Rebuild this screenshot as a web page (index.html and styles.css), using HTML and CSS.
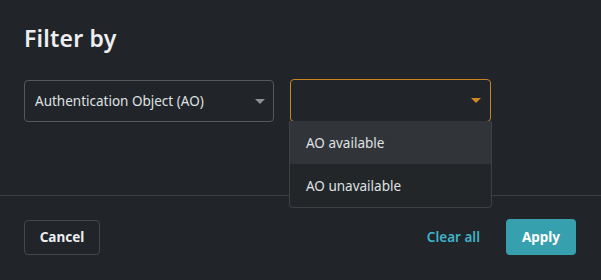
FILE: index.html
```html
<!DOCTYPE html>
<html lang="en">
<head>
<meta charset="utf-8">
<title>Filter by</title>
<link rel="stylesheet" href="styles.css">
</head>
<body>
<div class="dialog">
  <div class="content">
    <h1 class="title">Filter by</h1>
    <div class="filters">
      <div class="select">
        <span class="select-value">Authentication Object (AO)</span>
        <svg class="caret" width="10" height="5" viewBox="0 0 10 5"><path d="M0 0H10L5 5Z" fill="#8d9195"/></svg>
      </div>
      <div class="select select-open">
        <span class="select-value"></span>
        <svg class="caret" width="10" height="5" viewBox="0 0 10 5"><path d="M0 0H10L5 5Z" fill="#d08a22"/></svg>
        <ul class="menu">
          <li class="menu-item is-hover">AO available</li>
          <li class="menu-item">AO unavailable</li>
        </ul>
      </div>
    </div>
  </div>
  <div class="footer">
    <button class="btn btn-outline">Cancel</button>
    <div class="footer-right">
      <button class="btn btn-link">Clear all</button>
      <button class="btn btn-primary">Apply</button>
    </div>
  </div>
</div>
</body>
</html>
```
FILE: styles.css
```css
* { box-sizing: border-box; }
html, body {
  margin: 0;
  padding: 0;
  background: #212529;
  height: 100%;
}
body {
  font-family: "Noto Sans", "Liberation Sans", sans-serif;
  color: #e4e6e8;
}
.dialog {
  width: 601px;
  height: 280px;
  overflow: hidden;
}
.content {
  padding: 24px 24px 0 24px;
  height: 196px;
  border-bottom: 1px solid #3b3f43;
}
.title {
  margin: 0;
  font-size: 23px;
  line-height: 28px;
  font-weight: 600;
  color: #eceef0;
  letter-spacing: 0.2px;
}
.filters {
  display: flex;
  align-items: flex-end;
  gap: 16px;
  margin-top: 27px;
}
.select {
  position: relative;
  width: 250px;
  height: 42px;
  border: 1px solid #55595e;
  border-radius: 4px;
  display: flex;
  align-items: center;
  justify-content: space-between;
  padding: 0 8px 0 10px;
}
.select-value {
  font-size: 13.5px;
  color: #dfe1e3;
}
.select-open {
  width: 201px;
  height: 43px;
  border: 1.5px solid #c88420;
  padding-right: 9px;
}
.caret { display: block; }
.menu {
  position: absolute;
  top: 41px;
  left: -2px;
  width: 203px;
  margin: 0;
  padding: 0;
  list-style: none;
  background: #222629;
  border: 1px solid #3d4145;
  border-top: none;
  border-radius: 0 0 4px 4px;
  overflow: hidden;
  z-index: 2;
}
.menu-item {
  height: 43px;
  display: flex;
  align-items: center;
  padding-left: 16px;
  font-size: 13.5px;
  color: #dfe1e3;
}
.menu-item + .menu-item { height: 43px; }
.menu-item.is-hover { background: #313539; }
.footer {
  display: flex;
  justify-content: space-between;
  align-items: center;
  padding: 23px 25px 0 24px;
}
.footer-right {
  display: flex;
  align-items: center;
  gap: 26px;
}
.btn {
  font-family: inherit;
  font-size: 13.5px;
  font-weight: 700;
  border-radius: 4px;
  cursor: pointer;
}
.btn-outline {
  width: 76px;
  height: 35px;
  background: transparent;
  border: 1px solid #44484c;
  color: #eceef0;
}
.btn-link {
  background: none;
  border: none;
  padding: 0;
  color: #3fb2c8;
  font-weight: 600;
}
.btn-primary {
  width: 70px;
  height: 36px;
  border: none;
  background: #37a0ae;
  color: #ffffff;
}
```
